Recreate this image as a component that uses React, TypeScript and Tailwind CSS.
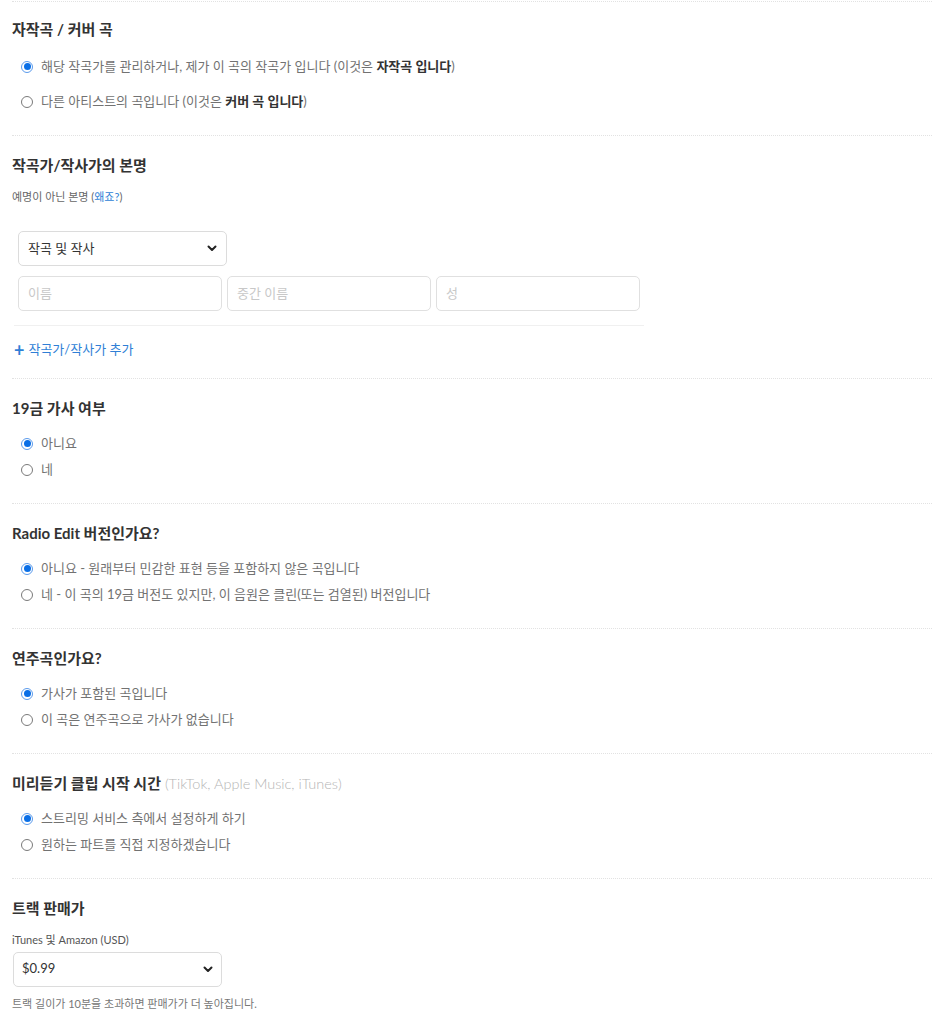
import React from 'react';

const font = { fontFamily: 'Lato, "Noto Sans CJK KR", sans-serif' };

function Radio({ checked }: { checked?: boolean }) {
  return checked ? (
    <span className="flex h-[12px] w-[12px] shrink-0 items-center justify-center rounded-full border border-[#5b9bec] bg-white">
      <span className="h-[7px] w-[7px] rounded-full bg-[#0a6fe6]" />
    </span>
  ) : (
    <span className="h-[12px] w-[12px] shrink-0 rounded-full border border-[#7a7a7a] bg-white" />
  );
}

function Option({ checked, children, tall }: { checked?: boolean; children: React.ReactNode; tall?: boolean }) {
  return (
    <label className={`flex items-center gap-[8px] pl-[9px] text-[13px] text-[#727272] ${tall ? 'h-[35px]' : 'h-[26px]'}`}>
      <Radio checked={checked} />
      <span>{children}</span>
    </label>
  );
}

function Chevron() {
  return (
    <svg width="10" height="7" viewBox="0 0 10 7" className="shrink-0">
      <path d="M1.5 1.5 L5 5 L8.5 1.5" fill="none" stroke="#222" strokeWidth="2" strokeLinecap="round" strokeLinejoin="round" />
    </svg>
  );
}

function Section({ title, extra, children, last }: { title: string; extra?: string; children: React.ReactNode; last?: boolean }) {
  return (
    <section className={`border-t border-dotted border-[#e2e2e2] pt-[19px] ${last ? 'pb-[12px]' : 'pb-[20px]'}`}>
      <h2 className="h-[20px] text-[15px] leading-[20px] font-bold text-[#333]">
        {title}
        {extra && <span className="text-[14.5px] font-light text-[#b5b5b5]"> {extra}</span>}
      </h2>
      {children}
    </section>
  );
}

export default function App() {
  const rows = [
    {
      title: '19금 가사 여부',
      opts: ['아니요', '네'],
    },
    {
      title: 'Radio Edit 버전인가요?',
      opts: ['아니요 - 원래부터 민감한 표현 등을 포함하지 않은 곡입니다', '네 - 이 곡의 19금 버전도 있지만, 이 음원은 클린(또는 검열된) 버전입니다'],
    },
    {
      title: '연주곡인가요?',
      opts: ['가사가 포함된 곡입니다', '이 곡은 연주곡으로 가사가 없습니다'],
    },
    {
      title: '미리듣기 클립 시작 시간',
      extra: '(TikTok, Apple Music, iTunes)',
      opts: ['스트리밍 서비스 측에서 설정하게 하기', '원하는 파트를 직접 지정하겠습니다'],
    },
  ];

  return (
    <div className="min-h-screen bg-white" style={font}>
      <div className="ml-[12px] w-[920px] pt-[1px]">
        <section className="border-t border-dotted border-[#e2e2e2] pt-[17px] pb-[16px]">
          <h2 className="h-[20px] text-[15px] leading-[20px] font-bold text-[#333]">자작곡 / 커버 곡</h2>
          <div className="mt-[10px]">
            <Option checked tall>
              해당 작곡가를 관리하거나, 제가 이 곡의 작곡가 입니다 (이것은 <b className="text-[#333]">자작곡 입니다</b>)
            </Option>
            <Option tall>
              다른 아티스트의 곡입니다 (이것은 <b className="text-[#333]">커버 곡 입니다</b>)
            </Option>
          </div>
        </section>

        <section className="border-t border-dotted border-[#e2e2e2] pt-[19px] pb-[18px]">
          <h2 className="h-[20px] text-[15px] leading-[20px] font-bold text-[#333]">작곡가/작사가의 본명</h2>
          <p className="mt-[14px] h-[16px] text-[11px] leading-[16px] text-[#666]">
            예명이 아닌 본명 (<span className="text-[#2f7fd6]">왜죠?</span>)
          </p>
          <div className="ml-[2px] mt-[26px] w-[630px]">
            <div className="ml-[4px] flex h-[35px] w-[209px] items-center justify-between rounded-[5px] border border-[#dcdcdc] pr-[9px] pl-[9px] text-[13px] text-[#333]">
              <span>작곡 및 작사</span>
              <Chevron />
            </div>
            <div className="ml-[4px] mt-[10px] flex gap-[5px]">
              <div className="flex h-[35px] w-[204px] items-center rounded-[5px] border border-[#e0e0e0] px-[9px] text-[13px] text-[#c8c8c8]">이름</div>
              <div className="flex h-[35px] w-[204px] items-center rounded-[5px] border border-[#e0e0e0] px-[9px] text-[13px] text-[#c8c8c8]">중간 이름</div>
              <div className="flex h-[35px] w-[204px] items-center rounded-[5px] border border-[#e0e0e0] px-[9px] text-[13px] text-[#c8c8c8]">성</div>
            </div>
            <div className="mt-[14px] h-px bg-[#f0f0f0]" />
            <div className="mt-[14px] flex items-center gap-[4px] text-[13px] text-[#2f7fd6]">
              <span className="text-[18px] leading-none font-bold">+</span>
              <span>작곡가/작사가 추가</span>
            </div>
          </div>
        </section>

        {rows.map(r => (
          <Section key={r.title} title={r.title} extra={r.extra}>
            <div className="mt-[13px]">
              <Option checked>{r.opts[0]}</Option>
              <Option>{r.opts[1]}</Option>
            </div>
          </Section>
        ))}

        <Section title="트랙 판매가" last>
          <p className="mt-[14px] h-[16px] text-[11px] leading-[16px] text-[#555]">iTunes 및 Amazon (USD)</p>
          <div className="ml-px mt-[4px] flex h-[35px] w-[209px] items-center justify-between rounded-[5px] border border-[#dcdcdc] px-[8px] text-[13px] text-[#333]">
            <span>$0.99</span>
            <Chevron />
          </div>
          <p className="mt-[9px] text-[11px] leading-[16px] text-[#777]">트랙 길이가 10분을 초과하면 판매가가 더 높아집니다.</p>
        </Section>
      </div>
    </div>
  );
}
